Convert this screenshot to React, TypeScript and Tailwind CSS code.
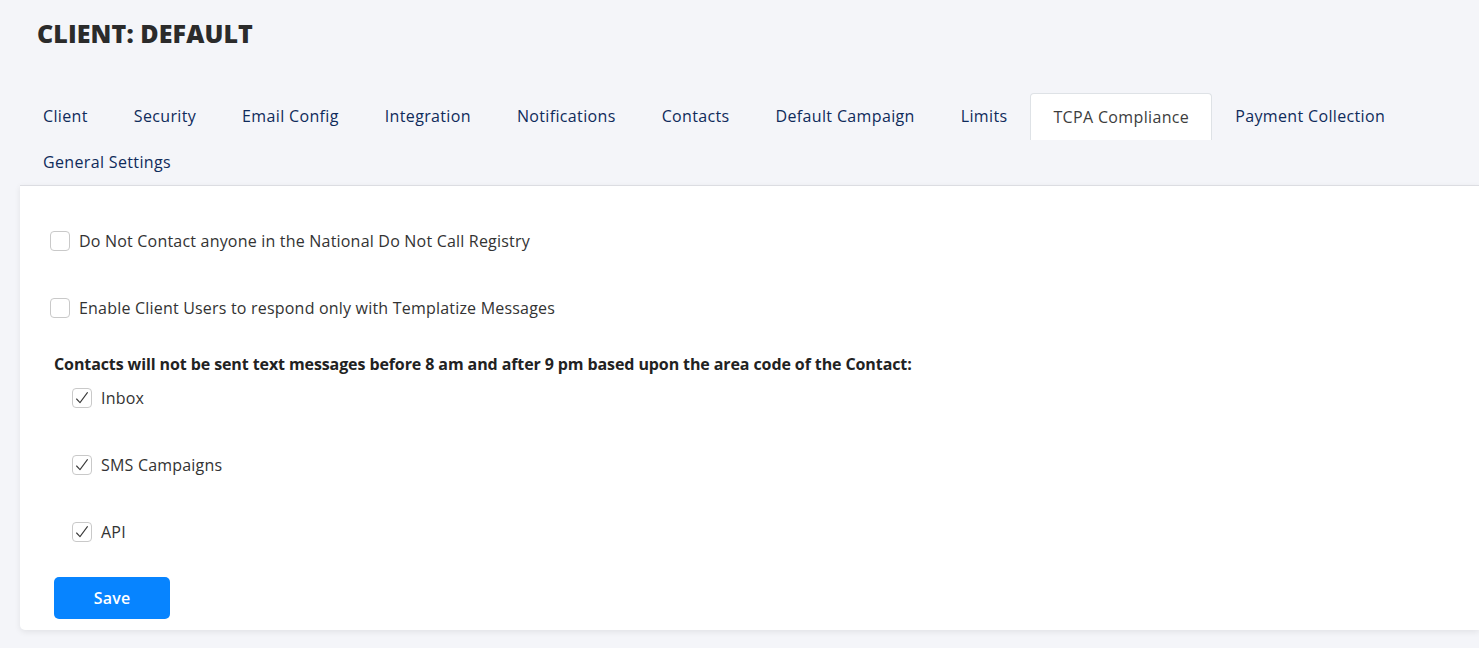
import type { ReactNode } from 'react';

const tabs = [
  'Client',
  'Security',
  'Email Config',
  'Integration',
  'Notifications',
  'Contacts',
  'Default Campaign',
  'Limits',
  'TCPA Compliance',
  'Payment Collection',
  'General Settings',
];

const ACTIVE = 'TCPA Compliance';

function Box({ checked }: { checked?: boolean }) {
  return (
    <span className="flex h-[20px] w-[20px] shrink-0 items-center justify-center rounded-[4px] border border-[#c9c9c9] bg-white">
      {checked && (
        <svg width="16" height="16" viewBox="0 0 16 16" fill="none">
          <path d="M2.6 9 L6 12.6 L13.4 2.6" stroke="#3a3a3a" strokeWidth="1.1" strokeLinecap="round" strokeLinejoin="round" />
        </svg>
      )}
    </span>
  );
}

function Check({ checked, children, className }: { checked?: boolean; children: ReactNode; className?: string }) {
  return (
    <label className={`flex h-[20px] items-center gap-[9px] text-[16px] leading-[20px] tracking-[0.2px] text-[#333] ${className ?? ''}`}>
      <Box checked={checked} />
      <span>{children}</span>
    </label>
  );
}

export default function App() {
  return (
    <div className="min-h-screen bg-[#f4f5f9] pl-[20px] pb-[18px]" style={{ fontFamily: '"Open Sans", "Liberation Sans", sans-serif' }}>
      <h1 className="pl-[17px] pt-[16px] text-[25px] font-extrabold leading-[34px] tracking-[0.1px] text-[#2b2b2b]">CLIENT: DEFAULT</h1>

      <div className="mt-[43px] flex flex-wrap">
        {tabs.map((t) =>
          t === ACTIVE ? (
            <div
              key={t}
              className="relative z-10 mb-[-1px] flex h-[47px] items-center rounded-t-[4px] border border-b-0 border-[#dee2e6] bg-white px-[22px] pb-[1px] text-[16px] tracking-[0.35px] text-[#3d3d3d]"
            >
              {t}
            </div>
          ) : (
            <div key={t} className="flex h-[46px] items-center px-[23px] text-[16px] tracking-[0.35px] text-[#0f2b5b]">
              {t}
            </div>
          )
        )}
      </div>

      <div className="rounded-bl-[5px] border-t border-[#dcdde2] bg-white pl-[30px] pb-[11px] pt-[45px] shadow-[0_2px_6px_rgba(0,0,0,0.08)]">
        <Check>Do Not Contact anyone in the National Do Not Call Registry</Check>
        <Check className="mt-[47px]">Enable Client Users to respond only with Templatize Messages</Check>

        <div className="mt-[36px] pl-[4px] text-[16px] font-bold leading-[20px] tracking-[-0.1px] text-[#222]">
          Contacts will not be sent text messages before 8 am and after 9 pm based upon the area code of the Contact:
        </div>

        <div className="mt-[14px] flex flex-col gap-[47px] pl-[22px]">
          <Check checked>Inbox</Check>
          <Check checked>SMS Campaigns</Check>
          <Check checked>API</Check>
        </div>

        <button className="ml-[4px] mt-[35px] block h-[42px] w-[116px] rounded-[5px] bg-[#0784ff] text-[16px] font-semibold tracking-[0.2px] text-white">
          Save
        </button>
      </div>
    </div>
  );
}
